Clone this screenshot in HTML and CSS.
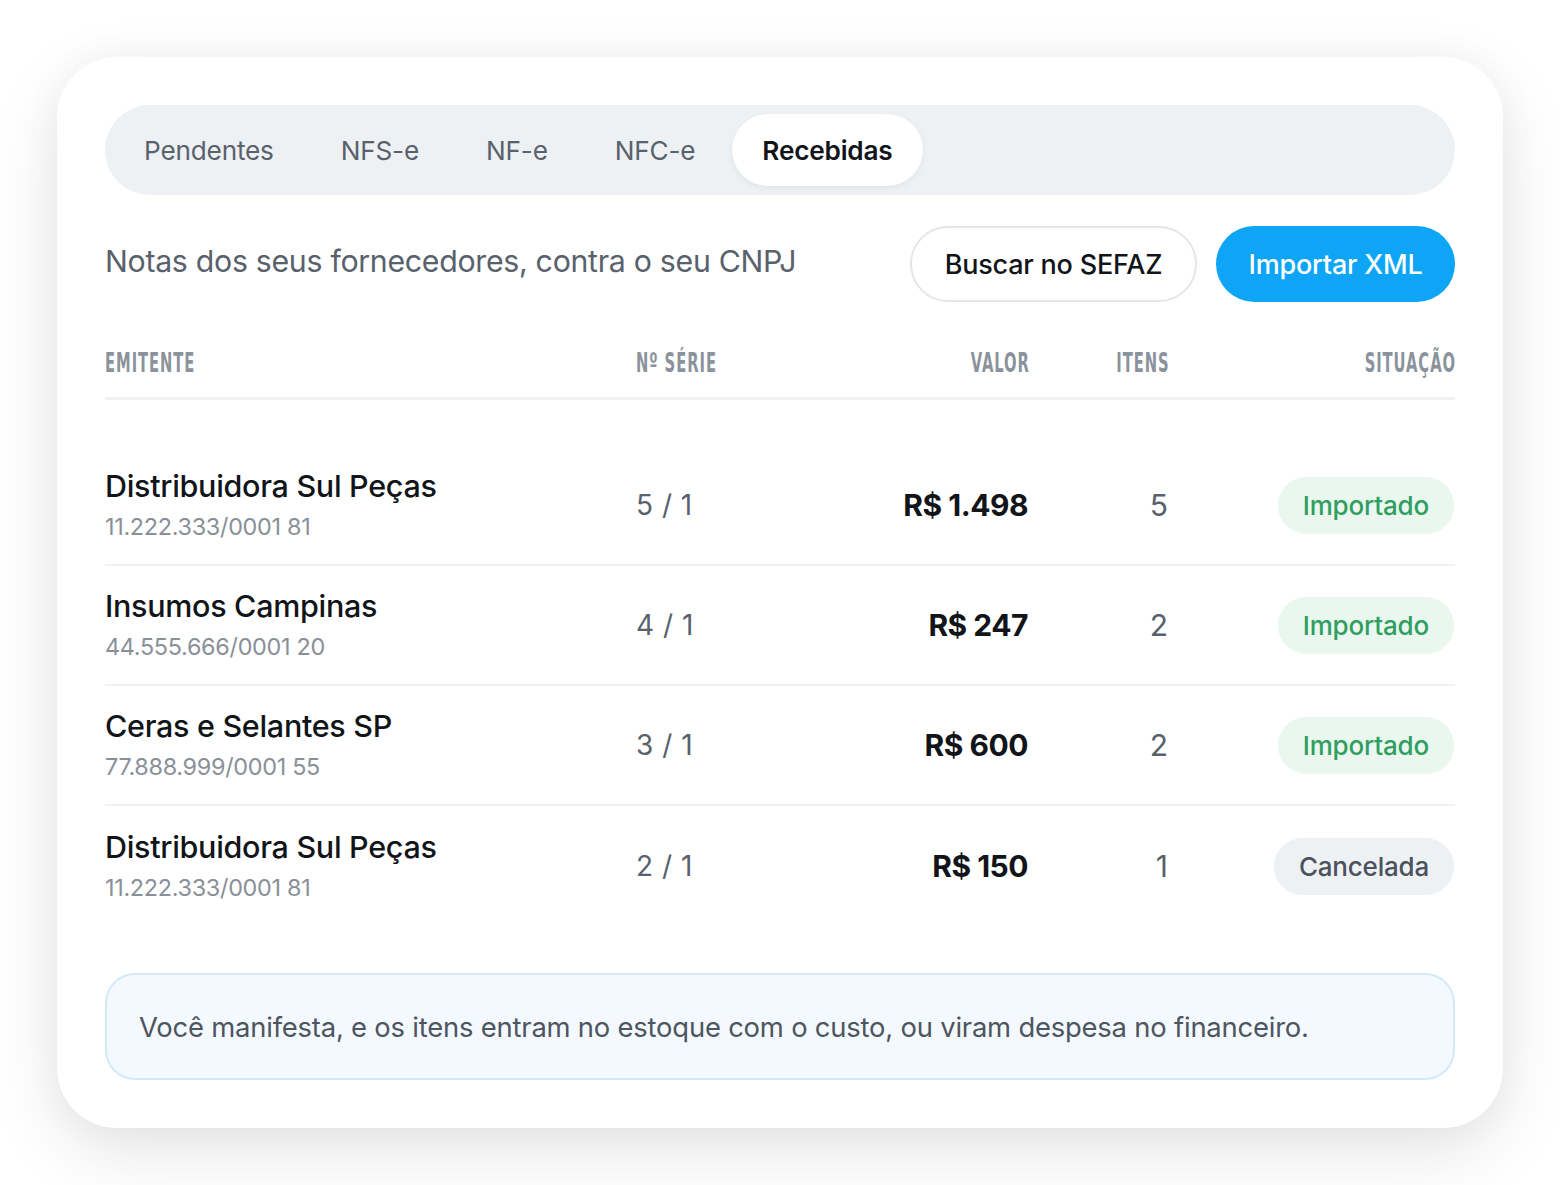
FILE: index.html
```html
<!DOCTYPE html>
<html lang="pt-BR">
<head>
<meta charset="utf-8">
<title>Recebidas</title>
<link rel="stylesheet" href="styles.css">
</head>
<body>
<div class="card">
  <nav class="tabs">
    <span class="tab">Pendentes</span>
    <span class="tab">NFS-e</span>
    <span class="tab">NF-e</span>
    <span class="tab">NFC-e</span>
    <span class="tab active">Recebidas</span>
  </nav>

  <div class="toolbar">
    <p class="subtitle">Notas dos seus fornecedores, contra o seu CNPJ</p>
    <div class="actions">
      <button class="btn btn-outline">Buscar no SEFAZ</button>
      <button class="btn btn-primary">Importar XML</button>
    </div>
  </div>

  <div class="table">
    <div class="thead">
      <span class="th"><span class="th-t">EMITENTE</span></span>
      <span class="th"><span class="th-t">Nº SÉRIE</span></span>
      <span class="th right"><span class="th-t r">VALOR</span></span>
      <span class="th right"><span class="th-t r">ITENS</span></span>
      <span class="th right"><span class="th-t r">SITUAÇÃO</span></span>
    </div>
    <div class="tbody">
      <div class="row">
        <div class="emit"><div class="name">Distribuidora Sul Peças</div><div class="cnpj">11.222.333/0001 81</div></div>
        <div class="serie">5 / 1</div>
        <div class="valor">R$ 1.498</div>
        <div class="itens">5</div>
        <div class="sit"><span class="badge ok">Importado</span></div>
      </div>
      <div class="row">
        <div class="emit"><div class="name">Insumos Campinas</div><div class="cnpj">44.555.666/0001 20</div></div>
        <div class="serie">4 / 1</div>
        <div class="valor">R$ 247</div>
        <div class="itens">2</div>
        <div class="sit"><span class="badge ok">Importado</span></div>
      </div>
      <div class="row">
        <div class="emit"><div class="name">Ceras e Selantes SP</div><div class="cnpj">77.888.999/0001 55</div></div>
        <div class="serie">3 / 1</div>
        <div class="valor">R$ 600</div>
        <div class="itens">2</div>
        <div class="sit"><span class="badge ok">Importado</span></div>
      </div>
      <div class="row">
        <div class="emit"><div class="name">Distribuidora Sul Peças</div><div class="cnpj">11.222.333/0001 81</div></div>
        <div class="serie">2 / 1</div>
        <div class="valor">R$ 150</div>
        <div class="itens">1</div>
        <div class="sit"><span class="badge off">Cancelada</span></div>
      </div>
    </div>
  </div>

  <div class="note">Você manifesta, e os itens entram no estoque com o custo, ou viram despesa no financeiro.</div>
</div>
</body>
</html>
```
FILE: styles.css
```css
* { box-sizing: border-box; }
html, body { margin: 0; padding: 0; background: #ffffff; }
body {
  font-family: Inter, "Noto Sans", "DejaVu Sans", sans-serif;
  color: #111418;
  padding: 57px;
}
.card {
  width: 1446px;
  height: 1071px;
  background: #fff;
  border-radius: 60px;
  padding: 48px 48px 0;
  box-shadow: 0 24px 70px rgba(0,0,0,0.10), 0 0 40px rgba(0,0,0,0.04);
}
.tabs {
  display: flex;
  align-items: center;
  gap: 7px;
  height: 90px;
  padding: 0 9px;
  background: #eef1f4;
  border-radius: 45px;
}
.tab {
  height: 72px;
  display: flex;
  align-items: center;
  padding: 0 30px;
  font-size: 26.2px;
  color: #59616c;
  border-radius: 36px;
  letter-spacing: -0.2px;
}
.tab.active {
  background: #fff;
  color: #111418;
  font-weight: 600;
  box-shadow: 0 2px 6px rgba(0,0,0,0.06);
}
.toolbar {
  display: flex;
  justify-content: space-between;
  align-items: center;
  margin-top: 31px;
  height: 76px;
}
.subtitle {
  margin: 0 0 6px;
  font-size: 30.3px;
  color: #59616c;
  letter-spacing: -0.3px;
}
.actions { display: flex; gap: 19px; }
.btn {
  height: 76px;
  border-radius: 38px;
  font-family: inherit;
  font-size: 27px;
  font-weight: 500;
  padding: 0 31px;
  letter-spacing: -0.2px;
}
.btn-outline {
  background: #fff;
  border: 2px solid #e3e6ea;
  color: #111418;
  width: 287px;
}
.btn-primary {
  background: #0ea5f7;
  border: 0;
  color: #fff;
  width: 239px;
}
.thead, .row {
  display: grid;
  grid-template-columns: 531px 196px 196px 140px 286px;
}
.thead {
  margin-top: 30px;
  padding: 16px 0 16px;
  border-bottom: 3px solid #eff1f3;
  line-height: 30px;
}
.th { display: block; }
.th.right { text-align: right; }
.th-t {
  display: inline-block;
  font-family: "Liberation Sans Narrow", "DejaVu Sans Condensed", sans-serif;
  font-weight: 700;
  font-size: 26px;
  color: #8a929c;
  letter-spacing: 1.5px;
  transform: scaleX(0.63);
  transform-origin: left center;
}
.th-t.r { transform-origin: right center; margin-right: -1.5px; }
.tbody { padding-top: 46px; }
.row {
  height: 120px;
  align-items: center;
  border-bottom: 2px solid #eff1f3;
}
.row:last-child { border-bottom: 0; }
.name {
  font-size: 30.5px;
  font-weight: 500;
  color: #111418;
  line-height: 36px;
  letter-spacing: -0.3px;
}
.cnpj {
  margin-top: 8px;
  font-size: 23.4px;
  color: #8a9099;
  line-height: 30px;
  letter-spacing: -0.3px;
}
.serie {
  font-size: 28px;
  color: #59616c;
  letter-spacing: 0.5px;
}
.valor {
  text-align: right;
  font-size: 30px;
  font-weight: 700;
  color: #111418;
  letter-spacing: -0.5px;
}
.itens {
  text-align: right;
  font-size: 30px;
  color: #59616c;
}
.sit { text-align: right; }
.badge {
  display: inline-flex;
  align-items: center;
  height: 57px;
  padding: 0 25px;
  border-radius: 29px;
  font-size: 26px;
  font-weight: 500;
  letter-spacing: -0.2px;
}
.badge.ok { background: #eaf7ef; color: #2f9e60; }
.badge.off { background: #eef1f4; color: #4a525d; }
.note {
  margin-top: 47px;
  height: 107px;
  display: flex;
  align-items: center;
  padding: 0 32px;
  background: #f3f9fe;
  border: 2px solid #d3e9f7;
  border-radius: 30px;
  font-size: 27.4px;
  color: #4d5560;
  letter-spacing: -0.2px;
}
```
